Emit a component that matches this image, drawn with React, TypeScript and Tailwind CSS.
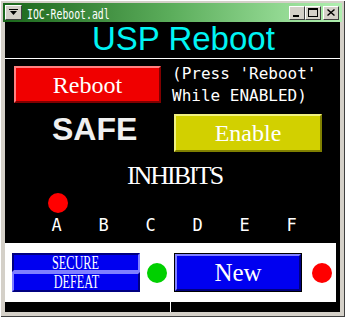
import React from "react";

const serif = "font-['Liberation_Serif',serif]";
const mono = "font-['DejaVu_Sans_Mono',monospace]";

const letters = ["A", "B", "C", "D", "E", "F"];

const TitleButton = ({ children }: { children: React.ReactNode }) => (
  <div className="w-[16px] h-[14px] bg-[#d4d0c8] border border-t-white border-l-white border-r-[#404040] border-b-[#404040] flex items-center justify-center">
    {children}
  </div>
);

const App = () => {
  return (
    <div className="w-[345px] h-[317px] bg-[#d4d0c8] pt-[3px] px-[3px] shadow-[inset_1px_1px_0_#ffffff,inset_-1px_-1px_0_#404040]">
      {/* Title bar */}
      <div className="h-[19px] flex items-center bg-linear-to-r from-[#1a661a] via-[#5cae5c] to-[#b0f0b0]">
        <div className="ml-[2px] w-[17px] h-[15px] bg-[#d4d0c8] border border-t-white border-l-white border-r-[#404040] border-b-[#404040] flex items-center justify-center">
          <svg width="9" height="7" viewBox="0 0 9 7">
            <rect x="0" y="0" width="9" height="1" fill="#000" />
            <polygon points="1,2 8,2 4.5,6" fill="#000" />
          </svg>
        </div>
        <div className="ml-[5px] w-[120px] overflow-visible">
          <span className={`${mono} inline-block origin-left scale-x-[0.7] text-[14px] leading-none text-white whitespace-pre`}>
            IOC-Reboot.adl
          </span>
        </div>
        <div className="ml-auto mr-[3px] flex items-center">
          <TitleButton>
            <div className="w-[6px] h-[2px] bg-black mt-[6px] mr-[3px]" />
          </TitleButton>
          <TitleButton>
            <div className="w-[10px] h-[9px] border border-t-2 border-black" />
          </TitleButton>
          <div className="w-[2px]" />
          <TitleButton>
            <svg width="8" height="7" viewBox="0 0 8 7">
              <path d="M0.5 0.5 L7.5 6.5 M7.5 0.5 L0.5 6.5" stroke="#000" strokeWidth="1.4" />
            </svg>
          </TitleButton>
        </div>
      </div>

      {/* Display area */}
      <div className="ml-[2px] w-[335px] h-[290px] bg-black flex flex-col">
        <div className="h-[33px] leading-[33px] pl-[87px] text-[33px] text-[#00f4f4] font-['Liberation_Sans',Arial,sans-serif] whitespace-nowrap">
          USP Reboot
        </div>
        <div className="mt-[3px] h-px bg-white" />

        <div className="mt-[7px] h-[37px] flex items-start pl-[9px]">
          <div className={`w-[147px] h-[37px] shrink-0 bg-[#f00000] border-2 border-t-[#ff8080] border-l-[#ff8080] border-r-[#800000] border-b-[#800000] flex items-center justify-center text-white text-[24px] ${serif}`}>
            Reboot
          </div>
          <div className={`ml-[11px] -mt-[3px] ${mono} text-[16px] leading-[22px] text-white whitespace-pre`}>
            {"(Press 'Reboot'\nWhile ENABLED)"}
          </div>
        </div>

        <div className="mt-[11px] h-[38px] flex items-start pl-[47px]">
          <div className="w-[122px] h-[30px] leading-[30px] text-[32px] font-bold text-[#f0f0f0] font-['Liberation_Sans',Arial,sans-serif]">
            SAFE
          </div>
          <div className={`w-[148px] h-[38px] shrink-0 bg-[#d2d000] border-2 border-t-[#f0f080] border-l-[#f0f080] border-r-[#808000] border-b-[#808000] flex items-center justify-center text-white text-[24px] ${serif}`}>
            Enable
          </div>
        </div>

        <div className={`mt-[9px] h-[30px] leading-[30px] pl-[4px] text-center text-white text-[26px] tracking-[-2px] ${serif}`}>
          INHIBITS
        </div>

        <div className="mt-[2px] h-[20px] flex pl-[29px]">
          {letters.map((l) => (
            <div key={l} className="w-[47px] flex justify-center">
              {l === "A" && <div className="w-[20px] h-[20px] rounded-full bg-[#ff0000]" />}
            </div>
          ))}
        </div>
        <div className="h-[24px] flex pl-[28px]">
          {letters.map((l) => (
            <div key={l} className={`w-[47px] text-center leading-[24px] text-[17px] text-white ${mono}`}>
              {l}
            </div>
          ))}
        </div>

        {/* Lower white panel */}
        <div className="mt-[6px] w-[331px] h-[59px] bg-white flex items-center pl-[7px]">
          <div className="w-[128px] h-[39px] flex flex-col">
            <div className="h-[19px] bg-[#0000f0] border-2 border-t-[#000080] border-l-[#000080] border-r-[#8080ff] border-b-[#8080ff] flex items-center justify-center">
              <span className={`inline-block scale-x-[0.68] text-[18px] leading-none text-white ${serif}`}>SECURE</span>
            </div>
            <div className="h-[20px] bg-[#0000f0] border-2 border-t-[#8080ff] border-l-[#8080ff] border-r-[#000080] border-b-[#000080] flex items-center justify-center">
              <span className={`inline-block scale-x-[0.68] text-[18px] leading-none text-white ${serif}`}>DEFEAT</span>
            </div>
          </div>
          <div className="ml-[7px] w-[20px] h-[20px] rounded-full bg-[#00d000]" />
          <div className="ml-[7px] w-[128px] h-[39px] border border-black">
            <div className={`w-full h-full bg-[#0000f0] border-2 border-t-[#8080ff] border-l-[#8080ff] border-r-[#000080] border-b-[#000080] flex items-center justify-center text-white text-[25px] ${serif}`}>
              New
            </div>
          </div>
          <div className="ml-[10px] w-[20px] h-[20px] rounded-full bg-[#ff0000]" />
        </div>

        <div className="h-[10px] flex pl-[165px]">
          <div className="w-px h-full bg-white" />
        </div>
      </div>
    </div>
  );
};

export default App;
